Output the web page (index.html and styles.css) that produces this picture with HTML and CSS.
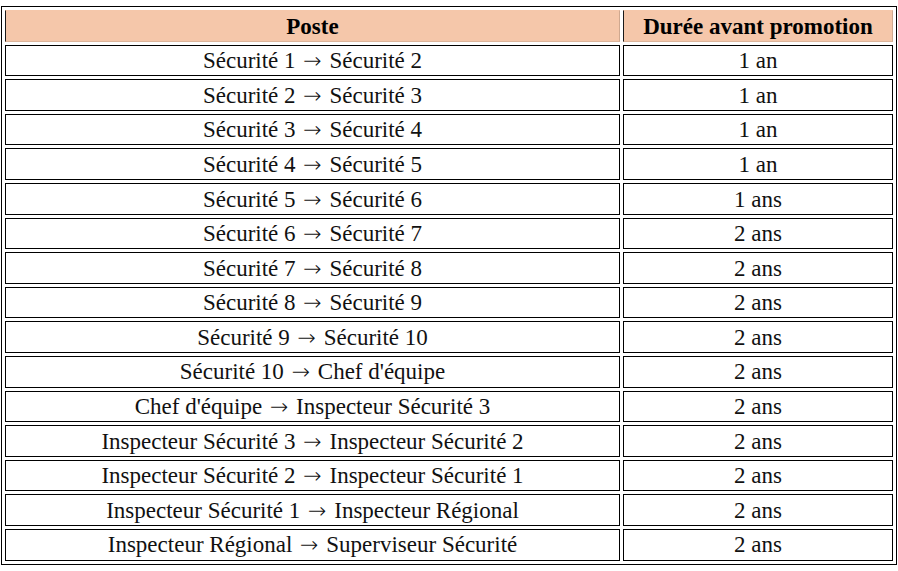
FILE: index.html
```html
<!DOCTYPE html>
<html lang="fr">
<head>
<meta charset="utf-8">
<title>Promotions</title>
<link rel="stylesheet" href="styles.css">
</head>
<body>
<table class="promo">
  <thead>
    <tr><th class="col-poste">Poste</th><th class="col-duree">Durée avant promotion</th></tr>
  </thead>
  <tbody>
    <tr><td>Sécurité 1 <span class="arr">→</span> Sécurité 2</td><td>1 an</td></tr>
    <tr><td>Sécurité 2 <span class="arr">→</span> Sécurité 3</td><td>1 an</td></tr>
    <tr><td>Sécurité 3 <span class="arr">→</span> Sécurité 4</td><td>1 an</td></tr>
    <tr><td>Sécurité 4 <span class="arr">→</span> Sécurité 5</td><td>1 an</td></tr>
    <tr><td>Sécurité 5 <span class="arr">→</span> Sécurité 6</td><td>1 ans</td></tr>
    <tr><td>Sécurité 6 <span class="arr">→</span> Sécurité 7</td><td>2 ans</td></tr>
    <tr><td>Sécurité 7 <span class="arr">→</span> Sécurité 8</td><td>2 ans</td></tr>
    <tr><td>Sécurité 8 <span class="arr">→</span> Sécurité 9</td><td>2 ans</td></tr>
    <tr><td>Sécurité 9 <span class="arr">→</span> Sécurité 10</td><td>2 ans</td></tr>
    <tr><td>Sécurité 10 <span class="arr">→</span> Chef d'équipe</td><td>2 ans</td></tr>
    <tr><td>Chef d'équipe <span class="arr">→</span> Inspecteur Sécurité 3</td><td>2 ans</td></tr>
    <tr><td>Inspecteur Sécurité 3 <span class="arr">→</span> Inspecteur Sécurité 2</td><td>2 ans</td></tr>
    <tr><td>Inspecteur Sécurité 2 <span class="arr">→</span> Inspecteur Sécurité 1</td><td>2 ans</td></tr>
    <tr><td>Inspecteur Sécurité 1 <span class="arr">→</span> Inspecteur Régional</td><td>2 ans</td></tr>
    <tr><td>Inspecteur Régional <span class="arr">→</span> Superviseur Sécurité</td><td>2 ans</td></tr>
  </tbody>
</table>
</body>
</html>
```
FILE: styles.css
```css
html, body {
  margin: 0;
  padding: 0;
  background: #ffffff;
}

body {
  font-family: "Liberation Serif", "Times New Roman", serif;
  font-size: 23px;
  color: #111111;
}

.promo {
  margin: 6px 0 0 1px;
  width: 896px;
  border: 1px solid #000000;
  border-collapse: separate;
  border-spacing: 3px;
  table-layout: fixed;
}

.promo th,
.promo td {
  padding: 1.5px 0 0 0;
  height: 31.6px;
  line-height: 28px;
  text-align: center;
  box-sizing: border-box;
  white-space: nowrap;
}

.promo th {
  background: #f5c7aa;
  font-weight: bold;
  color: #000000;
  border-top: 1px solid #f5c7aa;
  border-left: 1px solid #1a1a1a;
  border-right: 1px solid #cfa88f;
  border-bottom: 1px solid #dcb59b;
}

.promo td {
  border: 1px solid #000000;
}

.arr {
  font-family: "DejaVu Sans", "DejaVu Serif", sans-serif;
  font-weight: 200;
  font-size: 22px;
  line-height: 0;
  margin: 0 2px;
}

.col-poste {
  width: 615px;
}

.col-duree {
  width: auto;
}
```
